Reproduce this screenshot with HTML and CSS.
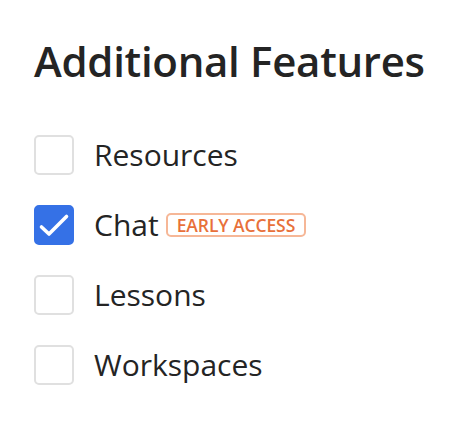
FILE: index.html
```html
<!DOCTYPE html>
<html>
<head>
<meta charset="utf-8">
<link rel="stylesheet" href="styles.css">
</head>
<body>
<section class="panel">
  <h1 class="title">Additional Features</h1>
  <ul class="options">
    <li class="option">
      <span class="box"></span>
      <span class="label">Resources</span>
    </li>
    <li class="option">
      <span class="box checked">
        <svg viewBox="0 0 40 40" width="40" height="40"><path d="M7.5 22 L15 29 L32.5 11.5" fill="none" stroke="#fff" stroke-width="3.6" stroke-linecap="round" stroke-linejoin="round"/></svg>
      </span>
      <span class="label">Chat</span>
      <span class="badge">EARLY ACCESS</span>
    </li>
    <li class="option">
      <span class="box"></span>
      <span class="label">Lessons</span>
    </li>
    <li class="option">
      <span class="box"></span>
      <span class="label">Workspaces</span>
    </li>
  </ul>
</section>
</body>
</html>
```

FILE: styles.css
```css
html, body {
  margin: 0;
  padding: 0;
  background: #ffffff;
}
body {
  font-family: "Open Sans", "Noto Sans", sans-serif;
  color: #242424;
}
.panel {
  padding: 35px 0 0 34px;
}
.title {
  margin: 0;
  font-size: 42px;
  line-height: 52px;
  font-weight: 600;
  letter-spacing: -0.3px;
}
.options {
  list-style: none;
  margin: 48px 0 0 0;
  padding: 0;
  display: flex;
  flex-direction: column;
  gap: 30px;
}
.option {
  display: flex;
  align-items: center;
  height: 40px;
}
.box {
  box-sizing: border-box;
  width: 40px;
  height: 40px;
  border: 2px solid #e0e0e0;
  border-radius: 5px;
  flex: none;
  display: block;
}
.box.checked {
  background: #3571e6;
  border-color: #3571e6;
  position: relative;
}
.box.checked svg {
  position: absolute;
  left: -2px;
  top: -2px;
}
.label {
  margin-left: 20px;
  font-size: 30px;
  line-height: 40px;
}
.badge {
  margin-left: 7px;
  box-sizing: border-box;
  height: 24px;
  padding: 0 9px;
  border: 2px solid #f6b797;
  border-radius: 5px;
  color: #e8703a;
  font-size: 17.5px;
  line-height: 20px;
  font-weight: 600;
  letter-spacing: -0.1px;
  display: flex;
  align-items: center;
  margin-top: -1px;
}
```
